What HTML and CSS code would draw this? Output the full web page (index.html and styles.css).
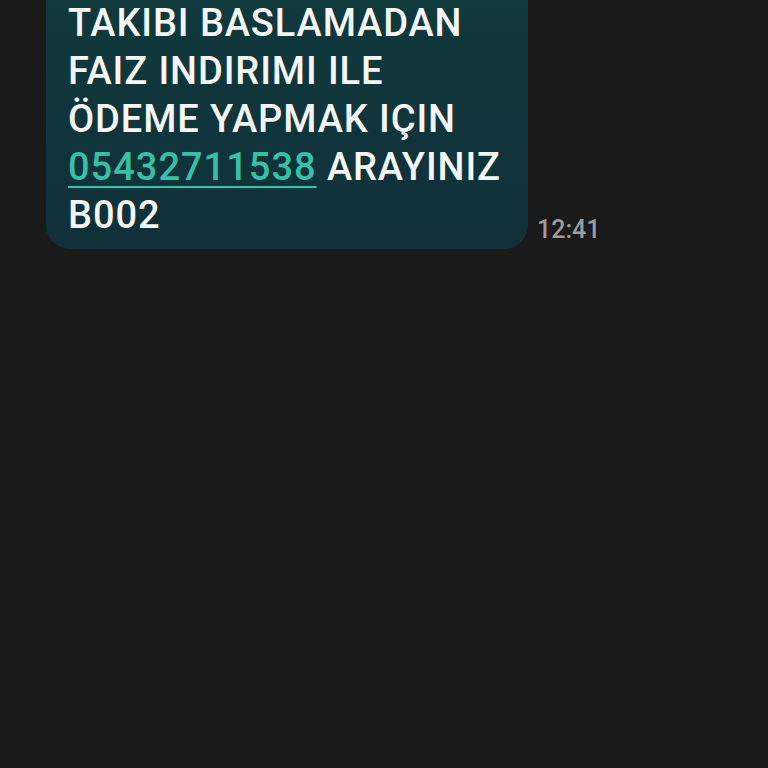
FILE: index.html
```html
<!DOCTYPE html>
<html>
<head>
<meta charset="utf-8">
<link rel="stylesheet" href="styles.css">
</head>
<body>
<div class="thread">
  <div class="row">
    <div class="bubble">
      <p class="text">TAKIBI BASLAMADAN<br>FAIZ INDIRIMI ILE<br>ÖDEME YAPMAK IÇIN<br><a class="phone" href="#">05432711538</a> ARAYINIZ<br>B002</p>
    </div>
    <span class="time">12:41</span>
  </div>
</div>
</body>
</html>
```
FILE: styles.css
```css
html, body {
  margin: 0;
  padding: 0;
  background: #1a1a1a;
  width: 768px;
  height: 768px;
  overflow: hidden;
}
.thread {
  padding-left: 46px;
}
.row {
  display: flex;
  align-items: flex-end;
  gap: 9px;
}
.bubble {
  width: 482px;
  box-sizing: border-box;
  margin-top: -37px;
  padding: 36px 0 10px 22px;
  background: linear-gradient(#103b3d, #11303a);
  border-radius: 0 0 24px 24px;
}
.text {
  margin: 0;
  font-family: Roboto, "Noto Sans", sans-serif;
  font-size: 38px;
  font-weight: 500;
  letter-spacing: 0.9px;
  line-height: 48px;
  color: #f4f6f6;
  white-space: nowrap;
}
.phone {
  color: #38c0a6;
  letter-spacing: 1px;
  text-decoration: underline;
  text-decoration-thickness: 2px;
  text-underline-offset: 6px;
}
.time {
  font-family: Roboto, "Noto Sans", sans-serif;
  font-size: 25px;
  font-weight: 500;
  color: #9c9c9c;
  margin-bottom: 5px;
}
```
